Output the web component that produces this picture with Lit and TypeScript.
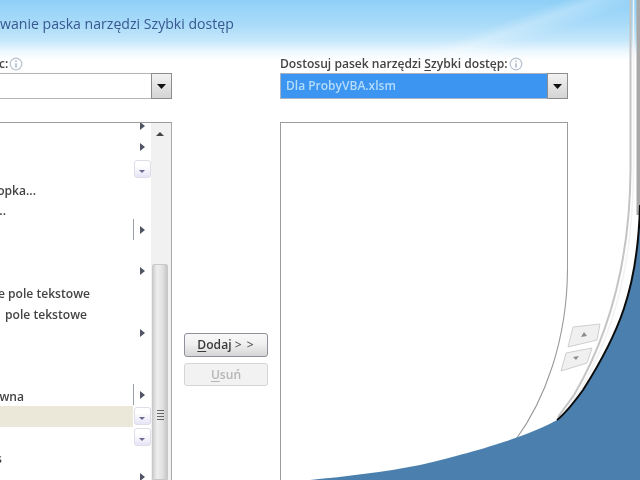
import { LitElement, html, css, svg } from "lit";
import { customElement } from "lit/decorators.js";

type Row = { text?: string; end?: number; ctl?: "arrow" | "sep" | "drop"; hi?: boolean };

const ROWS: Row[] = [
  { ctl: "arrow" },
  { ctl: "arrow" },
  { ctl: "drop" },
  { text: "opka...", end: 36 },
  { text: "...", end: 6 },
  { ctl: "sep" },
  {},
  { ctl: "arrow" },
  { text: "e pole tekstowe", end: 90 },
  { text: "pole tekstowe", end: 87 },
  { ctl: "arrow" },
  {},
  {},
  { text: "wna", end: 24, ctl: "sep" },
  { ctl: "drop", hi: true },
  { ctl: "drop" },
  { text: "s", end: 2 },
  { ctl: "arrow" },
];

const caret = html`<svg class="caret" viewBox="0 0 9 5" width="9" height="5"><path d="M0 0H9L4.5 5Z" fill="#111"/></svg>`;
const info = html`<svg class="info" viewBox="0 0 14 14" width="14" height="14">
  <circle cx="7" cy="7" r="5.8" fill="#fbfdff" stroke="#b9c2cc" stroke-width="1.2"/>
  <path d="M7 3.6V5M7 6.2V10.4" stroke="#98a4b2" stroke-width="1.2"/>
</svg>`;

@customElement("app-root")
export class AppRoot extends LitElement {
  static styles = css`
    :host { display: block; }
    .page {
      position: relative; width: 640px; height: 480px; overflow: hidden;
      display: flex; flex-direction: column;
      font-family: "Open Sans", "Noto Sans", sans-serif;
      color: #3c3c3c;
      background:
        linear-gradient(160deg, transparent 70%, rgba(255,255,255,.25) 74%, transparent 80%) 0 0 / 100% 60px no-repeat,
        linear-gradient(180deg, #8fd0f7 0, #a9dbf9 24px, #c4e7fb 40px, #eef8fe 52px, #fff 60px) 0 0 / 100% 60px no-repeat,
        #fff;
      filter: blur(0.45px);
    }
    .title {
      height: 54px; box-sizing: border-box; padding-top: 14px; flex: none;
      font-size: 14.1px; line-height: 20px; color: #38588f; white-space: nowrap; font-weight: 500;
    }
    .cols { flex: 1; min-height: 0; display: flex; }
    .left { width: 172px; flex: none; display: flex; flex-direction: column; }
    .right { width: 288px; flex: none; display: flex; flex-direction: column; }
    .mid {
      width: 108px; flex: none; box-sizing: border-box; padding: 279px 12px 0;
      display: flex; flex-direction: column; gap: 6px;
    }
    .label {
      height: 19px; display: flex; align-items: center; gap: 1px; flex: none;
      font-size: 12.1px; font-weight: 600; color: #444; white-space: nowrap;
    }
    .info { flex: none; }
    .label .cut { margin-left: -1px; }
    .combo {
      height: 26px; box-sizing: border-box; flex: none; display: flex;
      border: solid #b4b4b4; border-width: 1.5px 1.5px 1.5px 0; background: #fff;
    }
    .combo.sel { border: 1px solid #a8b4c4; background: #3b95f1; }
    .value { flex: 1; padding-left: 5px; font-size: 12px; font-weight: 600; line-height: 24px; color: #b5dcfb; }
    .drop {
      width: 21px; flex: none; display: flex; align-items: center; justify-content: center;
      background: linear-gradient(180deg, #f2f2f2, #d4d4d4);
      border: 1.5px solid #8c8c8c; box-sizing: border-box; margin: -1px -1px -1px 0;
    }
    .list {
      flex: 1; min-height: 0; margin-top: 23px; display: flex; overflow: hidden;
      border-top: 1.5px solid #9c9c9c; border-right: 1.5px solid #a8a8a8; background: #fff;
    }
    .list.r { border-left: 1.5px solid #9c9c9c; border-right: 1.2px solid #9c9c9c; }
    .rows { flex: 1; min-width: 0; margin-top: -7px; }
    .row { height: 20.65px; display: flex; align-items: center; position: relative; }
    .row.hi::before {
      content: ""; position: absolute; left: 0; width: 133px; top: 1px; bottom: -1px; background: #ece8d9;
    }
    .text {
      position: absolute; left: 0; top: 2px; bottom: -2px; display: flex; justify-content: flex-end; align-items: center;
      overflow: hidden; white-space: nowrap; font-size: 12.1px; font-weight: 600; color: #444;
    }
    .ctl {
      position: absolute; left: 133px; width: 18px; top: 0; bottom: 0;
      display: flex; align-items: center; justify-content: center;
    }
    .arrow { width: 0; height: 0; border-style: solid; border-width: 4px 0 4px 5px; border-color: transparent transparent transparent #4f5563; }
    .ctl.sep { border-left: 1px solid #9aa0a8; box-sizing: border-box; }
    .dd {
      width: 17px; height: 18px; box-sizing: border-box; border: 1px solid #dedde8; border-radius: 3px; margin-top: 2px;
      background: linear-gradient(180deg, #fff 30%, #e6e4f6);
      display: flex; align-items: flex-end; justify-content: center; padding-bottom: 4px;
    }
    .dd i { border-style: solid; border-width: 3px 3px 0; border-color: #6a6a90 transparent transparent; }
    .scroll {
      width: 20px; flex: none; background: #f1f1f1; position: relative; display: flex; flex-direction: column; align-items: center;
    }
    .up { margin-top: 9px; margin-right: 2px; border-style: solid; border-width: 0 4px 4px; border-color: transparent transparent #444; }
    .thumb {
      position: absolute; left: 1px; right: 3px; top: 141px; bottom: 0; border-radius: 2px 2px 0 0;
      background: linear-gradient(90deg, #d0d0d0, #efefef 30%, #e0e0e0 70%, #c6c6c6);
      border: 1px solid #c8c8c8; box-sizing: border-box; display: flex; flex-direction: column; align-items: center; gap: 2px; padding-top: 145px;
    }
    .thumb i { width: 7px; height: 1px; background: #666; flex: none; }
    .btn {
      height: 24px; box-sizing: border-box; border: 1.5px solid #8e9298; border-radius: 3px;
      background: linear-gradient(180deg, #f8f8f8, #f0f0f0 45%, #d6d6d6);
      text-align: center; font-size: 12.1px; font-weight: 600; line-height: 21px; color: #3a3a3a;
    }
    .btn.off { height: 23px; border: 1.5px solid #d6d6d6; background: #f2f2f2; color: #b6b6b6; }
    .gt { color: #666; letter-spacing: 1px; }
    u { text-underline-offset: 2px; }
    .overlay { position: absolute; inset: 0; width: 640px; height: 480px; }
  `;

  private row(r: Row) {
    const dd = html`<div class="dd"><i></i></div>`;
    return html`<div class="row ${r.hi ? "hi" : ""}">
      ${r.text ? html`<div class="text" style="width:${r.end}px"><span>${r.text}</span></div>` : ""}
      ${r.ctl
        ? html`<div class="ctl ${r.ctl === "sep" ? "sep" : ""}">${r.ctl === "drop" ? dd : html`<div class="arrow"></div>`}</div>`
        : ""}
    </div>`;
  }

  private overlay() {
    return svg`
      <rect x="565" y="272" width="8" height="208" fill="#fff"/>
      <path d="M567.5 270 C567 340 545 400 515.5 440" fill="none" stroke="#9a9a9a" stroke-width="1.1"/>
      <path d="M630.5 0 V170 C630 255 612 330 574 395 L558 417" fill="none" stroke="#c4c4c4" stroke-width="2"/>
      <path d="M633.5 0 V170 C633 260 616 330 578 394 L560 417" fill="none" stroke="#f2f2f2" stroke-width="1.5"/>
      <rect x="636.5" y="0" width="3.5" height="215" fill="#a8a8a8"/>
      <path d="M640 205 C638 290 618 335 583 390 C570 408 562 416 557 420 C535 432 500 446 420 465 C380 473 340 477 300 481 L640 481Z" fill="#4b80ae"/>
      <path d="M640 205 C638 290 618 335 583 390 C570 408 562 416 557 420" fill="none" stroke="#0c0c0c" stroke-width="2"/>
      <path d="M573 327 L600 324 L597 340 L568 347Z" fill="#f0f0f0" stroke="#cfcfcf"/>
      <path d="M581 337 L587 336 L584 332Z" fill="#8c8c8c"/>
      <path d="M566 353 L592 348 L587 363 L561 371Z" fill="#f0f0f0" stroke="#cfcfcf"/>
      <path d="M573 357 L579 356 L576 360Z" fill="#8c8c8c"/>
    `;
  }

  render() {
    return html`<div class="page">
      <div class="title">wanie paska narzędzi Szybki dostęp</div>
      <div class="cols">
        <div class="left">
          <div class="label"><span class="cut">c:</span>${info}</div>
          <div class="combo"><div class="value"></div><div class="drop">${caret}</div></div>
          <div class="list">
            <div class="rows">${ROWS.map((r) => this.row(r))}</div>
            <div class="scroll">
              <div class="up"></div>
              <div class="thumb"><i></i><i></i><i></i><i></i></div>
            </div>
          </div>
        </div>
        <div class="mid">
          <div class="btn"><u>D</u>odaj <span class="gt">&gt; &gt;</span></div>
          <div class="btn off"><u>U</u>suń</div>
        </div>
        <div class="right">
          <div class="label"><span>Dostosuj pasek narzędzi <u>S</u>zybki dostęp:</span>${info}</div>
          <div class="combo sel"><div class="value">Dla ProbyVBA.xlsm</div><div class="drop">${caret}</div></div>
          <div class="list r"></div>
        </div>
      </div>
      <svg class="overlay" viewBox="0 0 640 480">${this.overlay()}</svg>
    </div>`;
  }
}
